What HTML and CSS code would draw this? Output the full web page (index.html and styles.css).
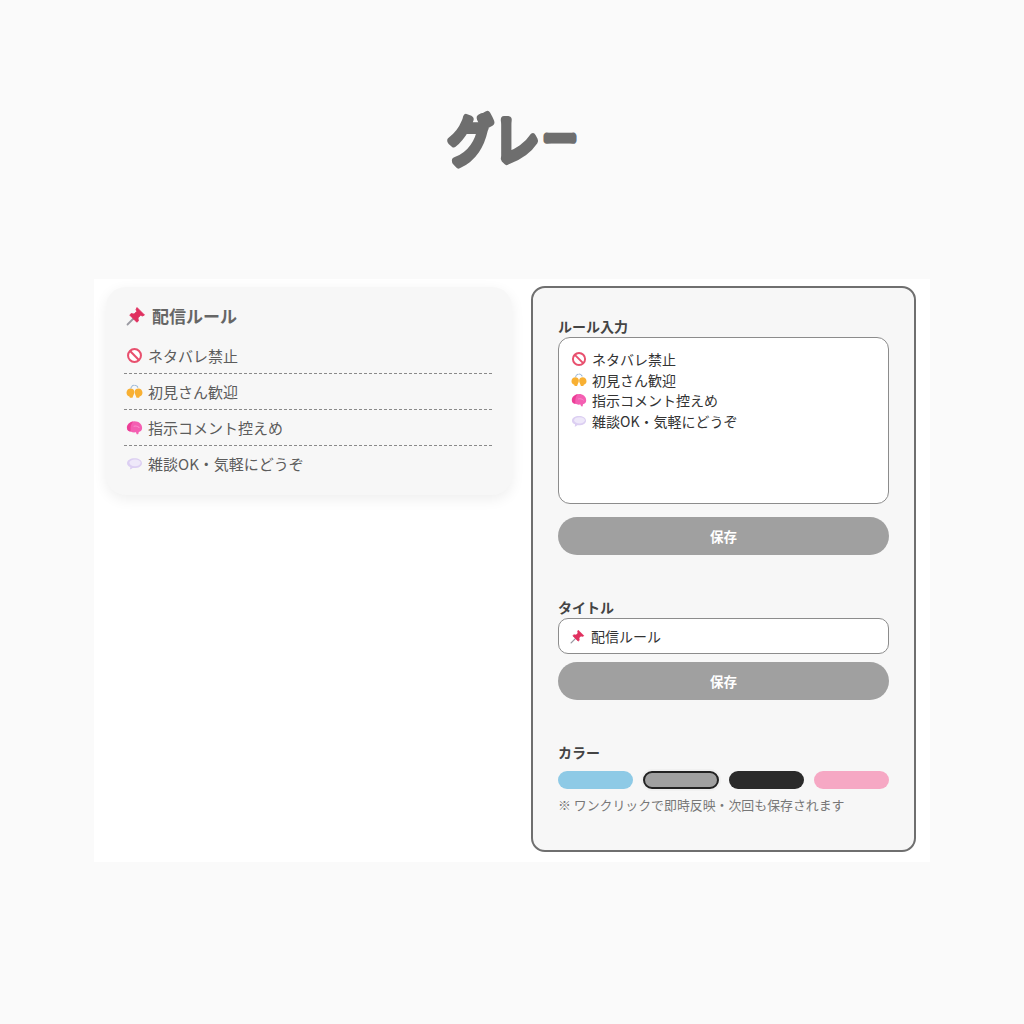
FILE: index.html
```html
<!DOCTYPE html>
<html lang="ja">
<head>
<meta charset="utf-8">
<title>グレー</title>
<link rel="stylesheet" href="styles.css">
</head>
<body>
<svg class="defs" width="0" height="0" aria-hidden="true">
  <defs>
    <symbol id="pin" viewBox="0 0 20 20">
      <path d="M1.5 18.5 L7.5 12.5" stroke="#9a9aa2" stroke-width="1.8" stroke-linecap="round" fill="none"/>
      <path d="M11 1.5 L18.5 9 L16.6 10 L14.6 9.3 L12 11.9 L12.4 15 L10.8 16.2 L3.8 9.2 L5 7.6 L8.1 8 L10.7 5.4 L10 3.4 Z" fill="#e0305f" stroke="#e0305f" stroke-width=".8" stroke-linejoin="round"/>
    </symbol>
    <symbol id="no" viewBox="0 0 20 20">
      <circle cx="10" cy="10" r="7.6" fill="#fff" stroke="#e8506e" stroke-width="2.4"/>
      <path d="M4.8 4.8 L15.2 15.2" stroke="#e8506e" stroke-width="2.4"/>
    </symbol>
    <symbol id="hands" viewBox="0 0 20 20">
      <path d="M.6 11.6 C.6 8.4 3 6.6 5.4 6.6 C7.8 6.6 9.6 8 9.8 10.4 C9.9 12.6 9 14 8.4 15.2 L7.6 17.4 L4.6 17.4 L4 16 C2 15.4 .6 13.8 .6 11.6 Z" fill="#f8b033"/>
      <path d="M19.4 11.6 C19.4 8.4 17 6.6 14.6 6.6 C12.2 6.6 10.4 8 10.2 10.4 C10.1 12.6 11 14 11.6 15.2 L12.4 17.4 L15.4 17.4 L16 16 C18 15.4 19.4 13.8 19.4 11.6 Z" fill="#f8b033"/>
      <path d="M5.8 6 C6.6 3.6 8.2 2.6 10 2.6 C11.8 2.6 13.4 3.6 14.2 6" stroke="#9db9d8" stroke-width="1.3" stroke-linecap="round" stroke-dasharray="1.6 1.4" fill="none"/>
    </symbol>
    <symbol id="brain" viewBox="0 0 20 20">
      <path d="M1 10.4 C.8 6.4 4.8 2.6 10 2.6 C15 2.6 19 6 19 10.6 C19 13.4 17.2 15 15 15.2 L14.6 17.4 C14 18.4 12.4 18.2 12.2 17 L11.8 15.6 C9.6 16 7.2 15.8 5.4 14.8 C2.8 14.6 1 13 1 10.4 Z" fill="#f45fb2"/>
      <path d="M1.2 10.4 C1.2 6.8 4.6 3.4 8.6 2.8 C6.4 5 5 7.4 5.6 14.8 C3 14.6 1.2 13 1.2 10.4 Z" fill="#ec3f96"/>
      <path d="M9.4 8.6 C11.6 8 13.8 8.6 15.4 10" stroke="#f98ccb" stroke-width="1.2" fill="none" stroke-linecap="round"/>
    </symbol>
    <symbol id="bubble" viewBox="0 0 20 20">
      <path d="M10 3.8 C14.8 3.8 18.8 6.2 18.8 9.6 C18.8 13 14.8 15.4 10 15.4 C9.2 15.4 8.5 15.3 7.7 15.2 C6.9 16.3 5.6 17 4.4 16.9 C5 16.1 5.2 15.2 5 14.2 C2.8 13.2 1.2 11.6 1.2 9.6 C1.2 6.2 5.2 3.8 10 3.8 Z" fill="#dccff2"/>
      <ellipse cx="10.6" cy="9.2" rx="6.6" ry="4" fill="#eee8f9"/>
    </symbol>
  </defs>
</svg>

<main class="page">
  <h1 class="page-title">
    <svg class="title-art" width="160" height="120" role="img">
      <text class="title-text" transform="scale(1 1.2)"><tspan x="16" y="51">グ</tspan><tspan x="62" y="51">レ</tspan><tspan class="title-bar" x="111" y="45">ー</tspan></text>
    </svg>
  </h1>
  <section class="board">
    <article class="rules-card">
      <h2 class="rules-title"><svg class="emoji emoji-title"><use href="#pin"/></svg>配信ルール</h2>
      <ul class="rules-list">
        <li class="rule"><svg class="emoji"><use href="#no"/></svg>ネタバレ禁止</li>
        <li class="rule"><svg class="emoji"><use href="#hands"/></svg>初見さん歓迎</li>
        <li class="rule"><svg class="emoji"><use href="#brain"/></svg>指示コメント控えめ</li>
        <li class="rule"><svg class="emoji"><use href="#bubble"/></svg>雑談OK・気軽にどうぞ</li>
      </ul>
    </article>

    <aside class="editor">
      <div class="field field-rules">
        <div class="label">ルール入力</div>
        <div class="textarea">
          <div class="line"><svg class="emoji emoji-sm"><use href="#no"/></svg>ネタバレ禁止</div>
          <div class="line"><svg class="emoji emoji-sm"><use href="#hands"/></svg>初見さん歓迎</div>
          <div class="line"><svg class="emoji emoji-sm"><use href="#brain"/></svg>指示コメント控えめ</div>
          <div class="line"><svg class="emoji emoji-sm"><use href="#bubble"/></svg>雑談OK・気軽にどうぞ</div>
        </div>
        <button class="save save-rules">保存</button>
      </div>

      <div class="field field-title">
        <div class="label">タイトル</div>
        <div class="input"><svg class="emoji emoji-input"><use href="#pin"/></svg>配信ルール</div>
        <button class="save save-title">保存</button>
      </div>

      <div class="field field-color">
        <div class="label">カラー</div>
        <div class="swatches">
          <span class="swatch blue"></span>
          <span class="swatch gray"></span>
          <span class="swatch black"></span>
          <span class="swatch pink"></span>
        </div>
        <p class="note">※ ワンクリックで即時反映・次回も保存されます</p>
      </div>
    </aside>
  </section>
</main>
</body>
</html>
```

FILE: styles.css
```css
* { box-sizing: border-box; }

html, body { margin: 0; padding: 0; }

body {
  background: #fafafa;
  font-family: "Noto Sans CJK JP", "Noto Sans", sans-serif;
  height: 1024px;
  overflow: hidden;
}

.defs { display: block; height: 0; }

.page {
  display: flex;
  flex-direction: column;
  align-items: center;
}

.page-title {
  margin: 0;
  height: 279px;
  padding-top: 100px;
}

.title-art { display: block; }

.title-text {
  font-family: "Noto Sans CJK JP", sans-serif;
  font-size: 45px;
  font-weight: 400;
  fill: #6e6e6e;
  stroke: #6e6e6e;
  stroke-width: 6.5px;
  stroke-linejoin: round;
  stroke-linecap: round;
}

.title-bar { font-size: 34px; stroke-width: 6px; }

.board {
  width: 836px;
  height: 583px;
  background: #fff;
  display: flex;
  align-items: flex-start;
  gap: 19px;
  padding: 7px 14px 0 12px;
}

.rules-card {
  flex: 0 0 406px;
  height: 208px;
  margin-top: 1px;
  background: #f7f7f7;
  border-radius: 20px;
  padding: 16px 20px 0 18px;
  box-shadow: 0 4px 14px rgba(0, 0, 0, .07);
}

.rules-title {
  margin: 0 0 9px 2px;
  display: flex;
  align-items: center;
  font-size: 17px;
  line-height: 26px;
  font-weight: 700;
  color: #666;
}

.rules-list { list-style: none; margin: 0; padding: 0; }

.rule {
  display: flex;
  align-items: center;
  height: 36px;
  padding-bottom: 1px;
  font-size: 15px;
  color: #5c5c5c;
  border-bottom: 1px dashed #8a8a8a;
}

.rule:last-child { border-bottom-color: transparent; }

.emoji {
  flex: none;
  width: 17px;
  height: 17px;
  margin: 0 5px 0 2px;
}

.emoji-title { width: 20px; height: 20px; margin: 0 6px 0 0; }
.emoji-sm { width: 16px; height: 16px; margin: 0 5px 0 0; }
.emoji-input { width: 15px; height: 15px; margin: 0 6px 0 0; }

.editor {
  flex: 0 0 385px;
  height: 566px;
  background: #f7f7f7;
  border: 2px solid #6f6f6f;
  border-radius: 14px;
  padding: 29px 25px 0;
}

.label {
  font-size: 14px;
  line-height: 18px;
  font-weight: 700;
  color: #444;
}

.textarea {
  height: 167px;
  margin-top: 2px;
  background: #fff;
  border: 1px solid #8c8c8c;
  border-radius: 12px;
  padding: 11px 12px;
}

.line {
  display: flex;
  align-items: center;
  height: 20.5px;
  font-size: 14px;
  color: #333;
}

.save {
  display: block;
  width: 100%;
  height: 38px;
  border: 0;
  border-radius: 19px;
  background: #a0a0a0;
  color: #fff;
  font: 700 13.5px "Noto Sans CJK JP", "Noto Sans", sans-serif;
}

.save-rules { margin-top: 13px; }
.save-title { margin-top: 8px; }

.field-title { margin-top: 43px; }
.field-color { margin-top: 43px; }

.input {
  display: flex;
  align-items: center;
  height: 36px;
  margin-top: 2px;
  background: #fff;
  border: 1px solid #8c8c8c;
  border-radius: 10px;
  padding: 0 11px;
  font-size: 14px;
  color: #333;
}

.swatches {
  display: grid;
  grid-template-columns: repeat(4, 1fr);
  gap: 10px;
  margin-top: 10px;
}

.swatch { height: 18px; border-radius: 9px; display: block; }
.blue { background: #8ecae6; }
.gray { background: #a0a0a0; border: 2px solid #222; box-shadow: 0 0 0 2px #f1f1f1; }
.black { background: #2b2b2b; }
.pink { background: #f6a8c4; }

.note {
  margin: 7px 0 0;
  font-size: 12.9px;
  line-height: 18px;
  color: #777;
}
```
